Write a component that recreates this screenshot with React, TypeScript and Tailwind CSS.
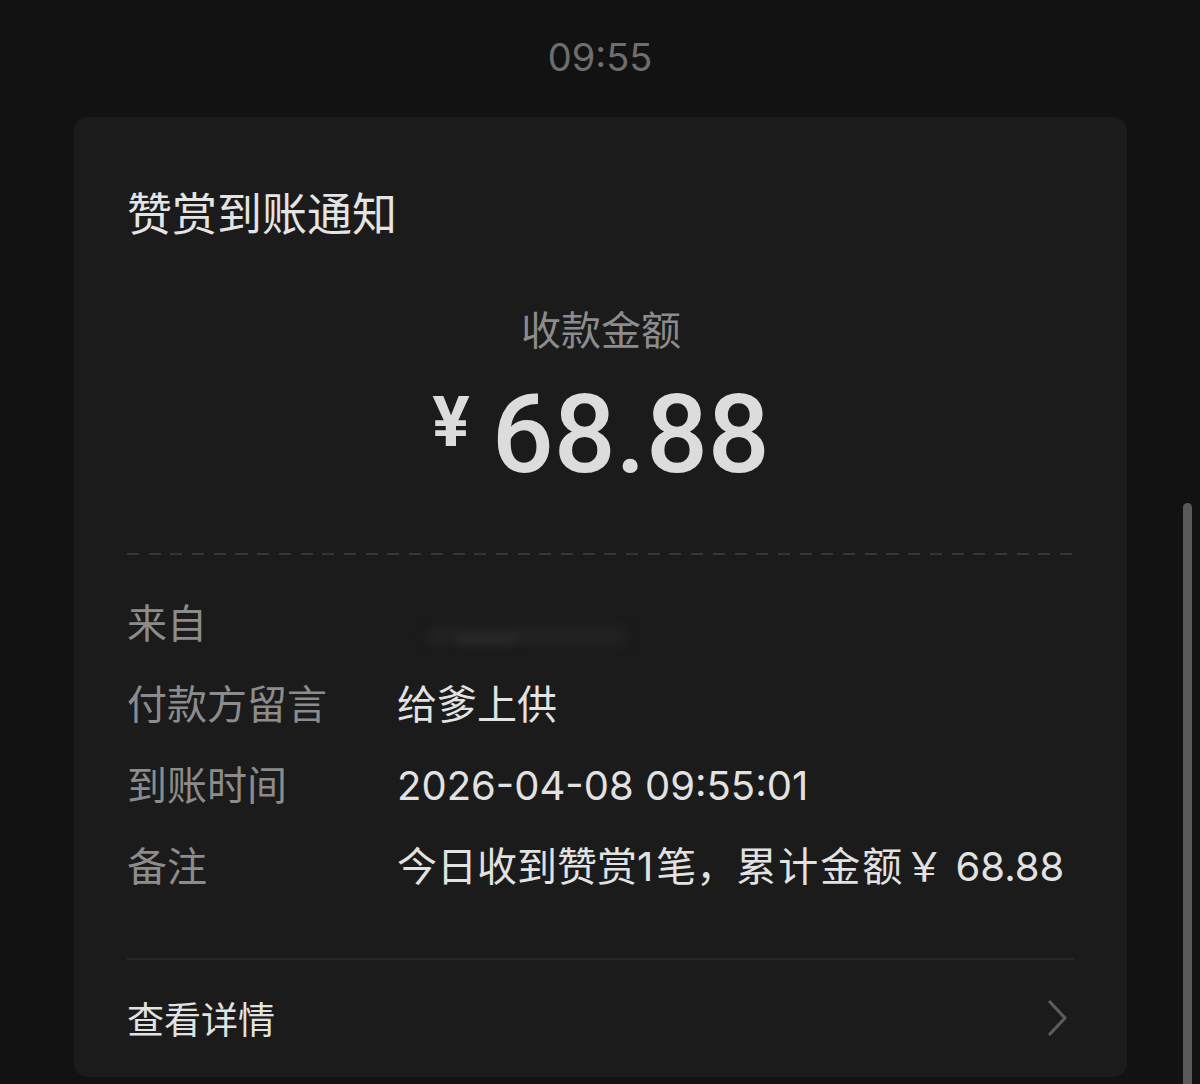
import React from "react";

const CJK = { fontFamily: '"Noto Sans CJK SC", "Noto Sans", sans-serif' };
const MIX = { fontFamily: 'Inter, "Noto Sans CJK SC", sans-serif' };
const BIG = { fontFamily: 'Roboto, "Noto Sans CJK SC", sans-serif' };

function Row({ label, children }: { label: string; children?: React.ReactNode }) {
  return (
    <div className="flex items-center h-[81px]">
      <div className="w-[270px] text-[40px] text-[#8c8c8c] leading-[50px]" style={CJK}>
        {label}
      </div>
      <div className="relative top-[3px] flex-1 text-[40px] text-[#e2e2e2] leading-[50px] whitespace-nowrap" style={MIX}>
        {children}
      </div>
    </div>
  );
}

export default function App() {
  return (
    <div className="relative w-[1200px] h-[1084px] bg-[#121212] overflow-hidden" style={CJK}>
      <div className="pt-[33px] h-[81px] text-center text-[38px] leading-[48px] text-[#6e6e6e]" style={MIX}>
        09:55
      </div>
      <div className="mt-[36px] ml-[74px] w-[1053px] h-[960px] rounded-[14px] bg-[#1b1b1b] pl-[53px] pr-[52px] pt-[70px]">
        <div className="text-[45px] leading-[50px] text-[#e4e4e4]" style={CJK}>
          赞赏到账通知
        </div>
        <div className="mt-[66px] text-center text-[40px] leading-[50px] text-[#8c8c8c]" style={CJK}>
          收款金额
        </div>
        <div className="mt-[22px] h-[120px] flex items-center justify-center text-[#dcdcdc]">
          <span className="text-[70px] font-bold leading-none mr-[22px] -mt-[26px]" style={BIG}>
            ¥
          </span>
          <span className="text-[109px] font-medium leading-none" style={BIG}>
            68.88
          </span>
        </div>
        <div className="mt-[58px] h-[2px] bg-[repeating-linear-gradient(to_right,#363636_0,#363636_12px,transparent_12px,transparent_21.7px)]" />
        <div className="mt-[25px]">
          <Row label="来自">
            <div className="relative h-[50px]">
              <div className="absolute left-[30px] top-[30px] w-[200px] h-[14px] rounded-full bg-[#242424] blur-[6px]" />
              <div className="absolute left-[60px] top-[36px] w-[60px] h-[8px] rounded-full bg-[#2a2a2a] blur-[4px]" />
            </div>
          </Row>
          <Row label="付款方留言">给爹上供</Row>
          <Row label="到账时间">2026-04-08 09:55:01</Row>
          <Row label="备注">
            今日收到赞赏<span className="tracking-[3px]">1</span>笔，<span className="tracking-[2px]">累计金额</span>￥ 68.88
          </Row>
        </div>
        <div className="mt-[54px] h-[2px] bg-[#272727]" />
        <div className="mt-[33px] h-[50px] flex items-center justify-between">
          <span className="text-[37px] leading-[50px] text-[#e2e2e2]" style={CJK}>
            查看详情
          </span>
          <svg width="24" height="38" viewBox="0 0 24 38" className="mr-[5px]">
            <path d="M4 3 L19 19 L4 35" fill="none" stroke="#5c5c5c" strokeWidth="3.2" strokeLinecap="round" strokeLinejoin="round" />
          </svg>
        </div>
      </div>
      <div className="absolute left-[1183px] top-[503px] w-[9px] h-[600px] rounded-full bg-[#595959]" />
    </div>
  );
}
